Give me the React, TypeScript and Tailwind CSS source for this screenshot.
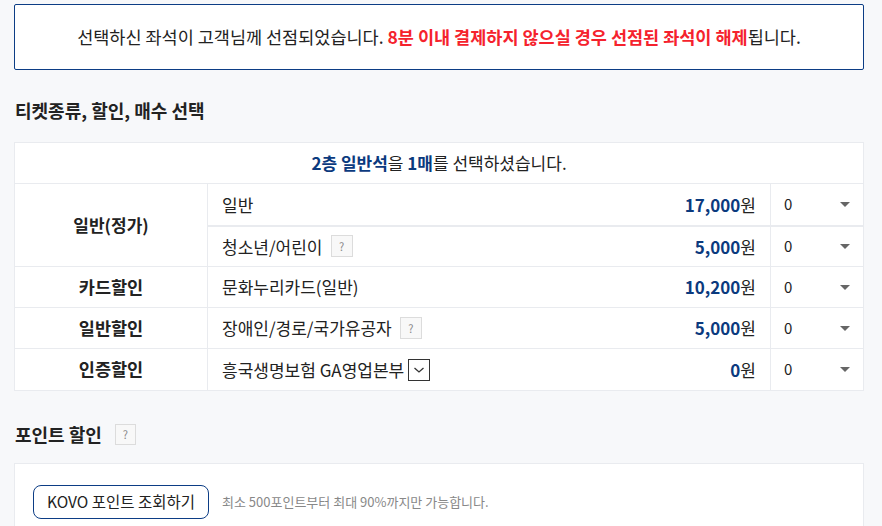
import React from 'react'

const font = { fontFamily: '"Noto Sans CJK KR", "Noto Sans", sans-serif' }

const Help: React.FC<{ big?: boolean }> = ({ big }) => (
  <span
    className={
      'inline-flex items-center justify-center border border-[#dcdcdc] bg-[#f8f8f8] text-[#888] text-[11px] leading-none align-middle ' +
      (big ? 'w-[21px] h-[21px] ml-[13px]' : 'w-[22px] h-[22px] ml-[8px]')
    }
  >
    ?
  </span>
)

const Qty: React.FC = () => (
  <td className="w-[93px] border-l border-[#e9ebef] pl-[13px] pr-[13px]">
    <div className="flex items-center justify-between text-[15px] text-[#222]">
      <span>0</span>
      <span className="w-0 h-0 border-l-[5px] border-r-[5px] border-t-[5px] border-l-transparent border-r-transparent border-t-[#666]" />
    </div>
  </td>
)

const Price: React.FC<{ v: string }> = ({ v }) => (
  <span className="text-[17px] text-[#222]">
    <b className="text-[#0b3a7e] font-bold">{v}</b>원
  </span>
)

export default function App() {
  return (
    <div className="min-h-[526px] bg-[#f7f8fa] pt-[4px] pl-[14px] pr-[18px] text-[#222]" style={font}>
      <div className="h-[66px] border-[1.5px] border-[#0c3d85] rounded-[2px] bg-white flex items-center justify-center text-[17.5px]">
        <span>
          선택하신 좌석이 고객님께 선점되었습니다.{' '}
          <b className="text-[#f5222d] font-bold">8분 이내 결제하지 않으실 경우 선점된 좌석이 해제</b>됩니다.
        </span>
      </div>

      <h2 className="mt-[27px] text-[18px] font-bold leading-[26px] pl-[1px]">티켓종류, 할인, 매수 선택</h2>

      <table className="mt-[19px] w-full bg-white border-collapse border border-[#e9ebef] text-[17px]">
        <tbody>
          <tr className="h-[41px]">
            <td colSpan={3} className="text-center">
              <b className="text-[#0b3a7e] font-bold">2층 일반석</b>을 <b className="text-[#0b3a7e] font-bold">1매</b>를 선택하셨습니다.
            </td>
          </tr>
          <tr className="h-[42px] border-t border-[#e9ebef]">
            <td rowSpan={2} className="w-[193px] text-center font-bold text-[17px] border-r border-[#e9ebef]">일반(정가)</td>
            <td className="pl-[14px] pr-[14px]">
              <div className="flex justify-between items-center"><span>일반</span><Price v="17,000" /></div>
            </td>
            <Qty />
          </tr>
          <tr className="h-[41px] border-t-2 border-[#e9ebef]">
            <td className="pl-[14px] pr-[14px]">
              <div className="flex justify-between items-center"><span className="flex items-center">청소년/어린이<Help /></span><Price v="5,000" /></div>
            </td>
            <Qty />
          </tr>
          <tr className="h-[41px] border-t border-[#e9ebef]">
            <td className="text-center font-bold text-[17.5px] border-r border-[#e9ebef]">카드할인</td>
            <td className="pl-[14px] pr-[14px]">
              <div className="flex justify-between items-center"><span>문화누리카드(일반)</span><Price v="10,200" /></div>
            </td>
            <Qty />
          </tr>
          <tr className="h-[41px] border-t border-[#e9ebef]">
            <td className="text-center font-bold text-[17.5px] border-r border-[#e9ebef]">일반할인</td>
            <td className="pl-[14px] pr-[14px]">
              <div className="flex justify-between items-center"><span className="flex items-center">장애인/경로/국가유공자<Help /></span><Price v="5,000" /></div>
            </td>
            <Qty />
          </tr>
          <tr className="h-[42px] border-t border-[#e9ebef]">
            <td className="text-center font-bold text-[17.5px] border-r border-[#e9ebef]">인증할인</td>
            <td className="pl-[14px] pr-[14px]">
              <div className="flex justify-between items-center">
                <span className="flex items-center">
                  흥국생명보험 GA영업본부
                  <span className="ml-[4px] w-[22px] h-[22px] border border-[#333] flex items-center justify-center">
                    <svg width="12" height="8" viewBox="0 0 12 8" fill="none" stroke="#333" strokeWidth="1.3">
                      <path d="M1.5 2 L6 6 L10.5 2" />
                    </svg>
                  </span>
                </span>
                <Price v="0" />
              </div>
            </td>
            <Qty />
          </tr>
        </tbody>
      </table>

      <div className="mt-[30px] flex items-center pl-[1px]">
        <h2 className="text-[18px] font-bold leading-[26px]">포인트 할인</h2>
        <Help big />
      </div>

      <div className="mt-[16px] bg-white border border-[#e9ebef] pt-[21px] pb-[20px] pl-[18px] flex items-center">
        <button className="h-[34px] px-[13px] border border-[#0c3d85] rounded-[8px] text-[15.5px] text-[#222]">
          KOVO 포인트 조회하기
        </button>
        <span className="ml-[13px] text-[13px] text-[#888]">최소 500포인트부터 최대 90%까지만 가능합니다.</span>
      </div>
    </div>
  )
}
